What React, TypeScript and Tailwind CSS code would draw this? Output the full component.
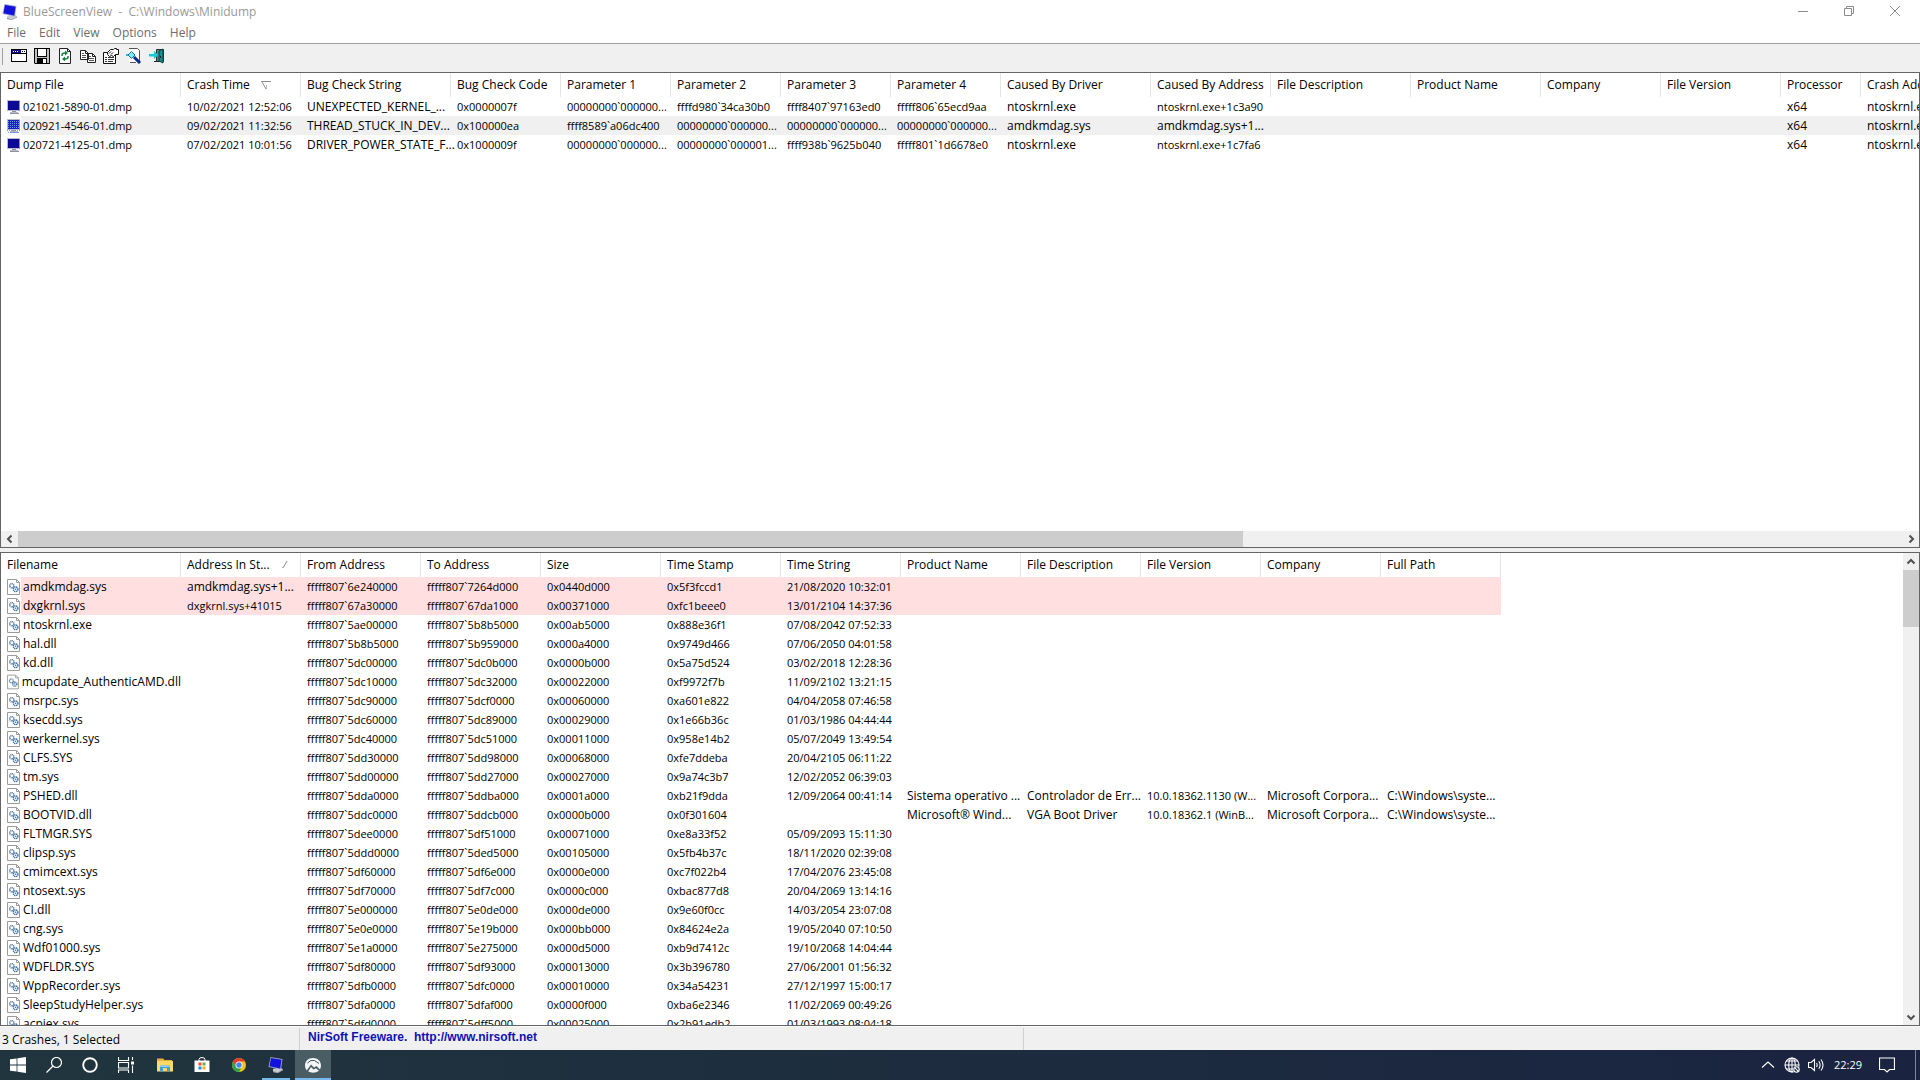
import type { ReactNode } from "react";
import clsx from "clsx";

type Column = { label: string; width: string; sort?: "desc" | "asc" };

const CRASH_COLUMNS: Column[] = [
  { label: "Dump File", width: "w-[180px]" },
  { label: "Crash Time", width: "w-[120px]", sort: "desc" },
  { label: "Bug Check String", width: "w-[150px]" },
  { label: "Bug Check Code", width: "w-[110px]" },
  { label: "Parameter 1", width: "w-[110px]" },
  { label: "Parameter 2", width: "w-[110px]" },
  { label: "Parameter 3", width: "w-[110px]" },
  { label: "Parameter 4", width: "w-[110px]" },
  { label: "Caused By Driver", width: "w-[150px]" },
  { label: "Caused By Address", width: "w-[120px]" },
  { label: "File Description", width: "w-[140px]" },
  { label: "Product Name", width: "w-[130px]" },
  { label: "Company", width: "w-[120px]" },
  { label: "File Version", width: "w-[120px]" },
  { label: "Processor", width: "w-[80px]" },
  { label: "Crash Address", width: "w-[120px]" },
];

const CRASHES: string[][] = [
  ["021021-5890-01.dmp", "10/02/2021 12:52:06", "UNEXPECTED_KERNEL_...", "0x0000007f", "00000000`000000...", "ffffd980`34ca30b0", "ffff8407`97163ed0", "fffff806`65ecd9aa", "ntoskrnl.exe", "ntoskrnl.exe+1c3a90", "", "", "", "", "x64", "ntoskrnl.exe"],
  ["020921-4546-01.dmp", "09/02/2021 11:32:56", "THREAD_STUCK_IN_DEV...", "0x100000ea", "ffff8589`a06dc400", "00000000`000000...", "00000000`000000...", "00000000`000000...", "amdkmdag.sys", "amdkmdag.sys+1...", "", "", "", "", "x64", "ntoskrnl.exe"],
  ["020721-4125-01.dmp", "07/02/2021 10:01:56", "DRIVER_POWER_STATE_F...", "0x1000009f", "00000000`000000...", "00000000`000001...", "ffff938b`9625b040", "fffff801`1d6678e0", "ntoskrnl.exe", "ntoskrnl.exe+1c7fa6", "", "", "", "", "x64", "ntoskrnl.exe"],
];

const SELECTED_CRASH = 1;

const DRIVER_COLUMNS: Column[] = [
  { label: "Filename", width: "w-[180px]" },
  { label: "Address In St...", width: "w-[120px]", sort: "asc" },
  { label: "From Address", width: "w-[120px]" },
  { label: "To Address", width: "w-[120px]" },
  { label: "Size", width: "w-[120px]" },
  { label: "Time Stamp", width: "w-[120px]" },
  { label: "Time String", width: "w-[120px]" },
  { label: "Product Name", width: "w-[120px]" },
  { label: "File Description", width: "w-[120px]" },
  { label: "File Version", width: "w-[120px]" },
  { label: "Company", width: "w-[120px]" },
  { label: "Full Path", width: "w-[120px]" },
];

const DRIVERS: string[][] = [
  ["amdkmdag.sys", "amdkmdag.sys+1...", "fffff807`6e240000", "fffff807`7264d000", "0x0440d000", "0x5f3fccd1", "21/08/2020 10:32:01"],
  ["dxgkrnl.sys", "dxgkrnl.sys+41015", "fffff807`67a30000", "fffff807`67da1000", "0x00371000", "0xfc1beee0", "13/01/2104 14:37:36"],
  ["ntoskrnl.exe", "", "fffff807`5ae00000", "fffff807`5b8b5000", "0x00ab5000", "0x888e36f1", "07/08/2042 07:52:33"],
  ["hal.dll", "", "fffff807`5b8b5000", "fffff807`5b959000", "0x000a4000", "0x9749d466", "07/06/2050 04:01:58"],
  ["kd.dll", "", "fffff807`5dc00000", "fffff807`5dc0b000", "0x0000b000", "0x5a75d524", "03/02/2018 12:28:36"],
  ["mcupdate_AuthenticAMD.dll", "", "fffff807`5dc10000", "fffff807`5dc32000", "0x00022000", "0xf9972f7b", "11/09/2102 13:21:15"],
  ["msrpc.sys", "", "fffff807`5dc90000", "fffff807`5dcf0000", "0x00060000", "0xa601e822", "04/04/2058 07:46:58"],
  ["ksecdd.sys", "", "fffff807`5dc60000", "fffff807`5dc89000", "0x00029000", "0x1e66b36c", "01/03/1986 04:44:44"],
  ["werkernel.sys", "", "fffff807`5dc40000", "fffff807`5dc51000", "0x00011000", "0x958e14b2", "05/07/2049 13:49:54"],
  ["CLFS.SYS", "", "fffff807`5dd30000", "fffff807`5dd98000", "0x00068000", "0xfe7ddeba", "20/04/2105 06:11:22"],
  ["tm.sys", "", "fffff807`5dd00000", "fffff807`5dd27000", "0x00027000", "0x9a74c3b7", "12/02/2052 06:39:03"],
  ["PSHED.dll", "", "fffff807`5dda0000", "fffff807`5ddba000", "0x0001a000", "0xb21f9dda", "12/09/2064 00:41:14", "Sistema operativo ...", "Controlador de Err...", "10.0.18362.1130 (W...", "Microsoft Corpora...", "C:\\Windows\\syste..."],
  ["BOOTVID.dll", "", "fffff807`5ddc0000", "fffff807`5ddcb000", "0x0000b000", "0x0f301604", "", "Microsoft® Wind...", "VGA Boot Driver", "10.0.18362.1 (WinB...", "Microsoft Corpora...", "C:\\Windows\\syste..."],
  ["FLTMGR.SYS", "", "fffff807`5dee0000", "fffff807`5df51000", "0x00071000", "0xe8a33f52", "05/09/2093 15:11:30"],
  ["clipsp.sys", "", "fffff807`5ddd0000", "fffff807`5ded5000", "0x00105000", "0x5fb4b37c", "18/11/2020 02:39:08"],
  ["cmimcext.sys", "", "fffff807`5df60000", "fffff807`5df6e000", "0x0000e000", "0xc7f022b4", "17/04/2076 23:45:08"],
  ["ntosext.sys", "", "fffff807`5df70000", "fffff807`5df7c000", "0x0000c000", "0xbac877d8", "20/04/2069 13:14:16"],
  ["CI.dll", "", "fffff807`5e000000", "fffff807`5e0de000", "0x000de000", "0x9e60f0cc", "14/03/2054 23:07:08"],
  ["cng.sys", "", "fffff807`5e0e0000", "fffff807`5e19b000", "0x000bb000", "0x84624e2a", "19/05/2040 07:10:50"],
  ["Wdf01000.sys", "", "fffff807`5e1a0000", "fffff807`5e275000", "0x000d5000", "0xb9d7412c", "19/10/2068 14:04:44"],
  ["WDFLDR.SYS", "", "fffff807`5df80000", "fffff807`5df93000", "0x00013000", "0x3b396780", "27/06/2001 01:56:32"],
  ["WppRecorder.sys", "", "fffff807`5dfb0000", "fffff807`5dfc0000", "0x00010000", "0x34a54231", "27/12/1997 15:00:17"],
  ["SleepStudyHelper.sys", "", "fffff807`5dfa0000", "fffff807`5dfaf000", "0x0000f000", "0xba6e2346", "11/02/2069 00:49:26"],
  ["acpiex.sys", "", "fffff807`5dfd0000", "fffff807`5dff5000", "0x00025000", "0x2b91edb2", "01/03/1993 08:04:18"],
];

const MENUS = ["File", "Edit", "View", "Options", "Help"];

// Hex numbers, dates, versions and module offsets are set one size smaller than names.
const isNumeric = (value: string) =>
  /^(0x|f{4,5}[0-9a-f]|0{8}`|\d\d\/|\d+\.\d|\d{6}-)|\+[0-9a-f]{4}/.test(value);

export default function App() {
  return (
    <div className="flex h-screen flex-col overflow-hidden bg-[#f0f0f0] font-['Open_Sans','Noto_Sans',sans-serif] text-[12px] text-black">
      <TitleBar />
      <MenuBar />
      <Toolbar />
      <main className="flex min-h-0 flex-1 flex-col gap-1">
        <section
          aria-label="Crashes"
          className="flex min-h-0 shrink grow basis-[476px] flex-col overflow-hidden border border-[#646464] bg-white"
        >
          <div className="min-h-0 flex-1 overflow-hidden">
            <ListView
              columns={CRASH_COLUMNS}
              rows={CRASHES}
              icon={(i) => <DumpIcon selected={i === SELECTED_CRASH} />}
              highlight={(i) => (i === SELECTED_CRASH ? "bg-[#f0f0f0]" : "")}
            />
          </div>
          <HorizontalScrollbar />
        </section>
        <section
          aria-label="Drivers"
          className="flex min-h-0 shrink grow basis-[474px] overflow-hidden border border-[#646464] bg-white"
        >
          <div className="min-w-0 flex-1 overflow-hidden">
            <ListView
              columns={DRIVER_COLUMNS}
              rows={DRIVERS}
              icon={() => <DriverIcon />}
              highlight={(i) => (i < 2 ? "bg-[#ffdfdf]" : "")}
            />
          </div>
          <VerticalScrollbar />
        </section>
      </main>
      <StatusBar />
      <Taskbar />
    </div>
  );
}

function TitleBar() {
  return (
    <header className="flex h-6 items-center bg-white pr-0.5 pl-[2px] text-[#999]">
      <BlueMonitorIcon className="size-4" />
      <h1 className="ml-[5px] flex-1 whitespace-pre">
        {"BlueScreenView  -  C:\\Windows\\Minidump"}
      </h1>
      <div className="flex h-full pb-[3px]">
        <WindowButton label="Minimize">
          <path d="M0 5.5h10" />
        </WindowButton>
        <WindowButton label="Restore">
          <path d="M.5 2.5h7v7h-7zM2.5 2.5v-2h7v7h-2" />
        </WindowButton>
        <WindowButton label="Close">
          <path d="M0 0l10 10M10 0L0 10" />
        </WindowButton>
      </div>
    </header>
  );
}

function WindowButton({ label, children }: { label: string; children: ReactNode }) {
  return (
    <button
      type="button"
      aria-label={label}
      className="flex w-[46px] items-center justify-center hover:bg-[#e5e5e5]"
    >
      <svg viewBox="0 0 10 10" className="size-[10px]" fill="none" stroke="#8c8c8c">
        {children}
      </svg>
    </button>
  );
}

function MenuBar() {
  return (
    <nav className="flex h-[19px] items-start gap-[13px] bg-white pl-[7px] text-[#6d6d6d]">
      {MENUS.map((menu) => (
        <button key={menu} type="button">
          {menu}
        </button>
      ))}
    </nav>
  );
}

function Toolbar() {
  return (
    <div
      role="toolbar"
      aria-label="Tools"
      className="flex h-[29px] items-start border-t border-[#a0a0a0] pt-[4px] pl-[2px]"
    >
      <div className="mr-[4px] h-[17px] w-px bg-[#a0a0a0]" />
      <ToolButton label="Advanced Options">
        <path fill="#000" d="M0 1h16v13H0z" />
        <path fill="#fff" d="M1 2h14v11H1z" />
        <path fill="#11118c" d="M1 2h9v3H1z" />
        <path fill="#fff" d="M2 3h1v1H2zM4 3h1v1H4zM6 3h1v1H6z" />
        <path fill="#000" d="M11 3h1v1h-1zM13 3h1v1h-1zM1 5h14v1H1z" />
      </ToolButton>
      <ToolButton label="Save">
        <path fill="#000" d="M0 0h16v16H1L0 15z" />
        <path fill="#c0c0c0" d="M1 1h2v8h10V1h2v14H1z" />
        <path fill="#fff" d="M4 1h8v7H4z" />
        <path fill="#000" d="M3 10h10v5H3z" />
        <path fill="#fff" d="M9 11h3v4H9z" />
      </ToolButton>
      <ToolButton label="Refresh">
        <path fill="#fff" stroke="#222" d="M2.5.5h8l3 3v12h-11z" />
        <path fill="none" stroke="#222" d="M10.5.5v3h3" />
        <path fill="none" stroke="#15803d" strokeWidth="1.5" d="M5 8V7q0-2 3-2h1M11 8v1q0 2-3 2H7" />
        <path fill="#15803d" d="M8 2.5l3 2.500-3 2.500zM8 8.500L5 11l3 2.500z" />
      </ToolButton>
      <ToolButton label="Copy">
        <path fill="#fff" stroke="#222" d="M.5 2.5h5l3 3v6h-8zM7.500 5.500h5l3 3v6h-8z" />
        <path fill="none" stroke="#222" d="M5.500 2.500v3h3M12.500 5.500v3h3" />
        <path fill="none" stroke="#555" d="M2 5.500h2M2 7.500h4M2 9.500h4M9 8.500h2M9 10.500h5M9 12.500h5" />
      </ToolButton>
      <ToolButton label="Properties">
        <path fill="#fff" stroke="#111" d="M.5 4.500h12v11H.5z" />
        <path fill="#fff" stroke="#111" d="M4.500 4.500l3-3h3l1-1h2v1h2v5h-3l-2 2-2-1-2 1-2-2z" />
        <path fill="none" stroke="#111" d="M6 5.500l2-2M8 6.500l2-2" />
        <path fill="none" stroke="#333" d="M2 9.500h2M5 9.500h6M2 11.500h2M5 11.500h6M2 13.500h2M5 13.500h5" />
      </ToolButton>
      <ToolButton label="Find">
        <path fill="#fff" d="M3 1h8l3 3v11H3z" />
        <path fill="none" stroke="#555" d="M3 .5h8.500l2 2V13M4 14.500h6" />
        <path fill="none" stroke="#0a2a8c" strokeWidth="3" d="M8 9l6 6" />
        <path fill="#7fe9f5" stroke="#1775a5" d="M5.500 3.500L9 7 5.500 10.500 2 7z" />
        <path fill="#2bbbe0" d="M0 6h2v2H0z" />
      </ToolButton>
      <ToolButton label="Exit">
        <path fill="#5d8a8a" stroke="#173838" d="M7.500 1.500h7v12h-7z" />
        <path fill="#168f8f" stroke="#0c4040" d="M10 3l4-2v14l-4-2z" />
        <path fill="#222" d="M11 8h1v2h-1zM5 13h5v1H5z" />
        <path fill="#16c8d8" d="M0 6h5V3l4.500 4L5 11V8.500H0z" />
      </ToolButton>
    </div>
  );
}

function ToolButton({ label, children }: { label: string; children: ReactNode }) {
  return (
    <button
      type="button"
      aria-label={label}
      className="flex w-[23px] items-center justify-center"
    >
      <svg viewBox="0 0 16 16" className="size-4">
        {children}
      </svg>
    </button>
  );
}

type ListViewProps = {
  columns: Column[];
  rows: string[][];
  icon: (index: number) => ReactNode;
  highlight: (index: number) => string;
};

function ListView({ columns, rows, icon, highlight }: ListViewProps) {
  return (
    <table className="w-px table-fixed border-separate border-spacing-0 text-left whitespace-nowrap">
      <colgroup>
        {columns.map((column) => (
          <col key={column.label} className={column.width} />
        ))}
      </colgroup>
      <thead>
        <tr className="h-6">
          {columns.map((column) => (
            <th
              key={column.label}
              className="border-r border-[#e5e5e5] p-0 font-normal"
            >
              <button type="button" className="flex w-full items-center pl-[6px]">
                {column.label}
                {column.sort === "desc" && (
                  <svg viewBox="0 0 10 8" className="ml-[11px] h-2 w-[10px]" fill="none" stroke="#8c8c8c">
                    <path d="M0 .5h10M1 1l4 7" />
                    <path d="M5.500 4v4" stroke="#b8b8b8" />
                  </svg>
                )}
                {column.sort === "asc" && (
                  <svg viewBox="0 0 6 8" className="mr-3 ml-auto h-2 w-[6px]" fill="none" stroke="#8c8c8c">
                    <path d="M5 0L1 7" />
                    <path d="M0 6.500h2" stroke="#b8b8b8" />
                  </svg>
                )}
              </button>
            </th>
          ))}
        </tr>
      </thead>
      <tbody>
        {rows.map((row, i) => (
          <tr key={row[0]} className="h-[19px] leading-[19px]">
            <td className={clsx("p-0", isNumeric(row[0]) && "text-[11px]")}>
              <div className="flex items-center pl-[6px]">
                {icon(i)}
                <span className={clsx("flex-1 pl-[2px]", highlight(i))}>{row[0]}</span>
              </div>
            </td>
            {columns.slice(1).map((column, c) => {
              const value = row[c + 1] ?? "";
              return (
                <td
                  key={column.label}
                  className={clsx(
                    "p-0 pl-[6px]",
                    isNumeric(value) && "text-[11px]",
                    highlight(i),
                  )}
                >
                  {value}
                </td>
              );
            })}
          </tr>
        ))}
      </tbody>
    </table>
  );
}

function DumpIcon({ selected }: { selected: boolean }) {
  return (
    <svg viewBox="0 0 14 14" className="size-[14px]">
      <path fill="#b9bcc8" d="M0 0h13v11H0zM3 12h8v2H3z" />
      <path fill="#8c90a0" d="M12 1h1v10h-1zM5 11h4v1H5zM3 13h9v1H3z" />
      <path fill={selected ? "#1c1cc4" : "#0a0a96"} d="M1 1h11v9H1z" />
      {selected && (
        <path
          stroke="#6f9be8"
          strokeDasharray="1 1"
          d="M1 2.500h11M1 4.500h11M1 6.500h11M1 8.500h11M0 11.500h13M1 13.500h12"
        />
      )}
    </svg>
  );
}

function DriverIcon() {
  return (
    <svg viewBox="0 0 14 16" className="h-4 w-[14px]" fill="none">
      <path fill="#fff" stroke="#9a9a9a" d="M.5.5h9l3 3v12H.5z" />
      <path stroke="#9a9a9a" d="M9.500.5v3h3" />
      <circle cx="4.800" cy="6.800" r="2.100" stroke="#4b7299" strokeWidth="1.400" strokeDasharray="1 .5" />
      <circle cx="8.600" cy="10.300" r="2.300" stroke="#3a6ea5" strokeWidth="1.400" strokeDasharray="1.200 .5" />
      <circle cx="8.600" cy="10.300" r=".8" fill="#3a6ea5" />
    </svg>
  );
}

function Chevron({ d }: { d: string }) {
  return (
    <svg viewBox="0 0 10 10" className="size-[10px]" fill="none" stroke="#505050" strokeWidth="2">
      <path d={d} />
    </svg>
  );
}

function HorizontalScrollbar() {
  return (
    <div className="flex h-4 shrink-0 bg-[#f0f0f0]">
      <button type="button" aria-label="Scroll left" className="flex w-[17px] items-center justify-center">
        <Chevron d="M6.500 1.500L3 5l3.500 3.500" />
      </button>
      <div className="flex-1">
        <div className="h-full w-[65%] bg-[#cdcdcd]" />
      </div>
      <button type="button" aria-label="Scroll right" className="flex w-[17px] items-center justify-center">
        <Chevron d="M3.500 1.500L7 5 3.500 8.500" />
      </button>
    </div>
  );
}

function VerticalScrollbar() {
  return (
    <div className="flex w-4 shrink-0 flex-col bg-[#f0f0f0]">
      <button type="button" aria-label="Scroll up" className="flex h-[17px] items-center justify-center">
        <Chevron d="M1.500 6.500L5 3l3.500 3.500" />
      </button>
      <div className="flex-1">
        <div className="h-[13%] w-full bg-[#cdcdcd]" />
      </div>
      <button type="button" aria-label="Scroll down" className="flex h-[17px] items-center justify-center">
        <Chevron d="M1.500 3.500L5 7l3.500-3.500" />
      </button>
    </div>
  );
}

function StatusBar() {
  return (
    <footer className="flex h-6 shrink-0 border-t border-[#fafafa] bg-[#f0f0f0] pt-px">
      <div className="w-[300px] border-r border-[#d0d0d0] pt-[3px] pl-[2px] leading-[18px]">
        3 Crashes, 1 Selected
      </div>
      <div className="w-[724px] border-r border-[#d0d0d0] pl-2 font-['Liberation_Sans',Arial,sans-serif] text-[12px] leading-[18px] font-bold whitespace-pre text-[#1010b4]">
        {"NirSoft Freeware.  "}
        <a href="http://www.nirsoft.net">http://www.nirsoft.net</a>
      </div>
    </footer>
  );
}

function Taskbar() {
  return (
    <div className="flex h-[30px] shrink-0 bg-linear-to-r from-[#20353d] to-[#1a2340] text-white">
      <TaskButton label="Start">
        <path fill="#fff" d="M0 2.300l6.600-.9v6.200H0zM7.400 1.300L16 0v7.600H7.400zM0 8.400h6.600v6.200L0 13.700zM7.400 8.400H16V16l-8.600-1.200z" />
      </TaskButton>
      <TaskButton label="Search">
        <circle cx="10.500" cy="5.500" r="5" fill="none" stroke="#fff" strokeWidth="1.200" />
        <path stroke="#fff" strokeWidth="1.200" d="M7 9L.5 15.500" />
      </TaskButton>
      <TaskButton label="Cortana">
        <circle cx="8" cy="8" r="6.800" fill="none" stroke="#fff" strokeWidth="1.900" />
      </TaskButton>
      <TaskButton label="Task View">
        <path
          fill="none"
          stroke="#fff"
          strokeWidth="1.100"
          d="M.5 0v3.500h10V0M.5 5.500h10v5.500H.5zM.5 16v-3h10v3M14.500 0v3M14.500 8.500V16"
        />
        <path fill="#fff" d="M13 4.500h3v3h-3z" />
      </TaskButton>
      <div className="ml-[3px] flex gap-px">
        <TaskButton label="File Explorer">
          <path fill="#e8b339" d="M0 1.500h6l1.500 1.500H15v3H0z" />
          <path fill="#ffd868" d="M0 4h16v10.500H0z" />
          <path fill="#3f9fd8" d="M3 8.500h10v6h-3V11H6v3.500H3z" />
          <path fill="#8fd0f2" d="M3 8.500h10v1.500H3z" />
        </TaskButton>
        <TaskButton label="Microsoft Store">
          <path fill="none" stroke="#fff" d="M5 4V2.500Q5 .5 8 .5t3 2V4" />
          <path fill="#fff" d="M.5 3.500h15V15h-15z" />
          <path fill="#e8502f" d="M4.500 5.500h3v3h-3z" />
          <path fill="#6bb12c" d="M8.500 5.500h3v3h-3z" />
          <path fill="#1f8fd6" d="M4.500 9.500h3v3h-3z" />
          <path fill="#f2b01e" d="M8.500 9.500h3v3h-3z" />
        </TaskButton>
        <TaskButton label="Google Chrome">
          <circle cx="8" cy="8" r="7" fill="#fbc116" />
          <path fill="#e33b2e" d="M1.940 4.500A7 7 0 0 1 14.060 4.500H8L5 9.700z" />
          <path fill="#2ba24c" d="M1.940 4.500A7 7 0 0 0 8 15l3-5.300H5z" />
          <circle cx="8" cy="8" r="3.500" fill="#fff" />
          <circle cx="8" cy="8" r="2.700" fill="#4285f4" />
        </TaskButton>
        <TaskButton label="BlueScreenView" running>
          <BlueMonitorShapes />
        </TaskButton>
        <TaskButton label="System monitor" running active>
          <path fill="#f4f6f6" d="M8 1C3 1 0 4.500 0 8.500c0 2 .7 3.500 1.700 5L6 7.500l3 3 2.500-1.500 3.500 3.500c.6-1.200 1-2.500 1-4C16 4.500 13 1 8 1z" />
          <path fill="#f4f6f6" d="M3.200 14.500L6 10l2.500 2.500 2.500-1.300 3 2.500c-3 2.300-7.600 2.600-10.800.8z" />
          <path fill="none" stroke="#42525a" d="M2.500 6q3-3.500 7-2.500l4.500 3" />
        </TaskButton>
      </div>
      <div className="ml-auto flex items-center">
        <TrayButton label="Show hidden icons">
          <path d="M2 10.500l6-5.500 6 5.500" />
        </TrayButton>
        <TrayButton label="Network">
          <circle cx="8" cy="8" r="7" />
          <ellipse cx="8" cy="8" rx="3.300" ry="7" />
          <path d="M1 8h14M2.500 4h11M2.500 12H9M8 1v14" />
          <circle cx="12.500" cy="12.500" r="3.500" fill="#1b2742" stroke="none" />
          <circle cx="12.500" cy="12.500" r="2.700" />
          <path d="M10.700 10.700l3.600 3.600" />
        </TrayButton>
        <TrayButton label="Volume">
          <path d="M.5 5.500h2.500l3.500-3v11L3 10.500H.5zM8.500 6q1.300 2 0 4M10.800 4.300q2.600 3.700 0 7.400M13 2.500q4 5.500 0 11" />
        </TrayButton>
        <time className="ml-[6px] w-[39px] text-[11px]">22:29</time>
        <button type="button" aria-label="Notifications" className="ml-[6px]">
          <svg viewBox="0 0 16 16" className="size-4" fill="none" stroke="#fff" strokeWidth="1.200">
            <path d="M.5 1h15v11.500h-5L8 15l-2.500-2.500h-5z" />
          </svg>
        </button>
        <div className="mr-1 ml-5 h-[30px] w-px bg-[#7d869a]" />
      </div>
    </div>
  );
}

type TaskButtonProps = {
  label: string;
  running?: boolean;
  active?: boolean;
  children: ReactNode;
};

function TaskButton({ label, running, active, children }: TaskButtonProps) {
  return (
    <button
      type="button"
      aria-label={label}
      className={clsx(
        "relative flex h-full w-9 items-center justify-center",
        active && "bg-[#4a5c64]",
      )}
    >
      <svg viewBox="0 0 16 16" className="size-4">
        {children}
      </svg>
      {running && (
        <span
          className={clsx(
            "absolute bottom-0 h-[2px] bg-[#76b9ed]",
            active ? "inset-x-0" : "inset-x-1",
          )}
        />
      )}
    </button>
  );
}

function TrayButton({ label, children }: { label: string; children: ReactNode }) {
  return (
    <button type="button" aria-label={label} className="flex w-6 justify-center">
      <svg viewBox="0 0 16 16" className="size-4" fill="none" stroke="#fff" strokeWidth="1.100">
        {children}
      </svg>
    </button>
  );
}

function BlueMonitorIcon({ className }: { className?: string }) {
  return (
    <svg viewBox="0 0 16 16" className={className}>
      <BlueMonitorShapes />
    </svg>
  );
}

// Tilted screen standing on a small grey foot.
function BlueMonitorShapes() {
  return (
    <>
      <path fill="#c9cbd0" d="M5 12l7-2 3 2.500-5 3.500-5-1z" />
      <path fill="#8d9098" d="M5 14l5 1.500 5-3v1L10 16l-5-1z" />
      <path fill="#9fa6c4" d="M2.500 0L14.500 2l-1.500 10.500L.5 10z" />
      <path fill="#1212dc" d="M3 1l10.500 1.800-1.300 8.700L1.500 9.300z" />
    </>
  );
}
